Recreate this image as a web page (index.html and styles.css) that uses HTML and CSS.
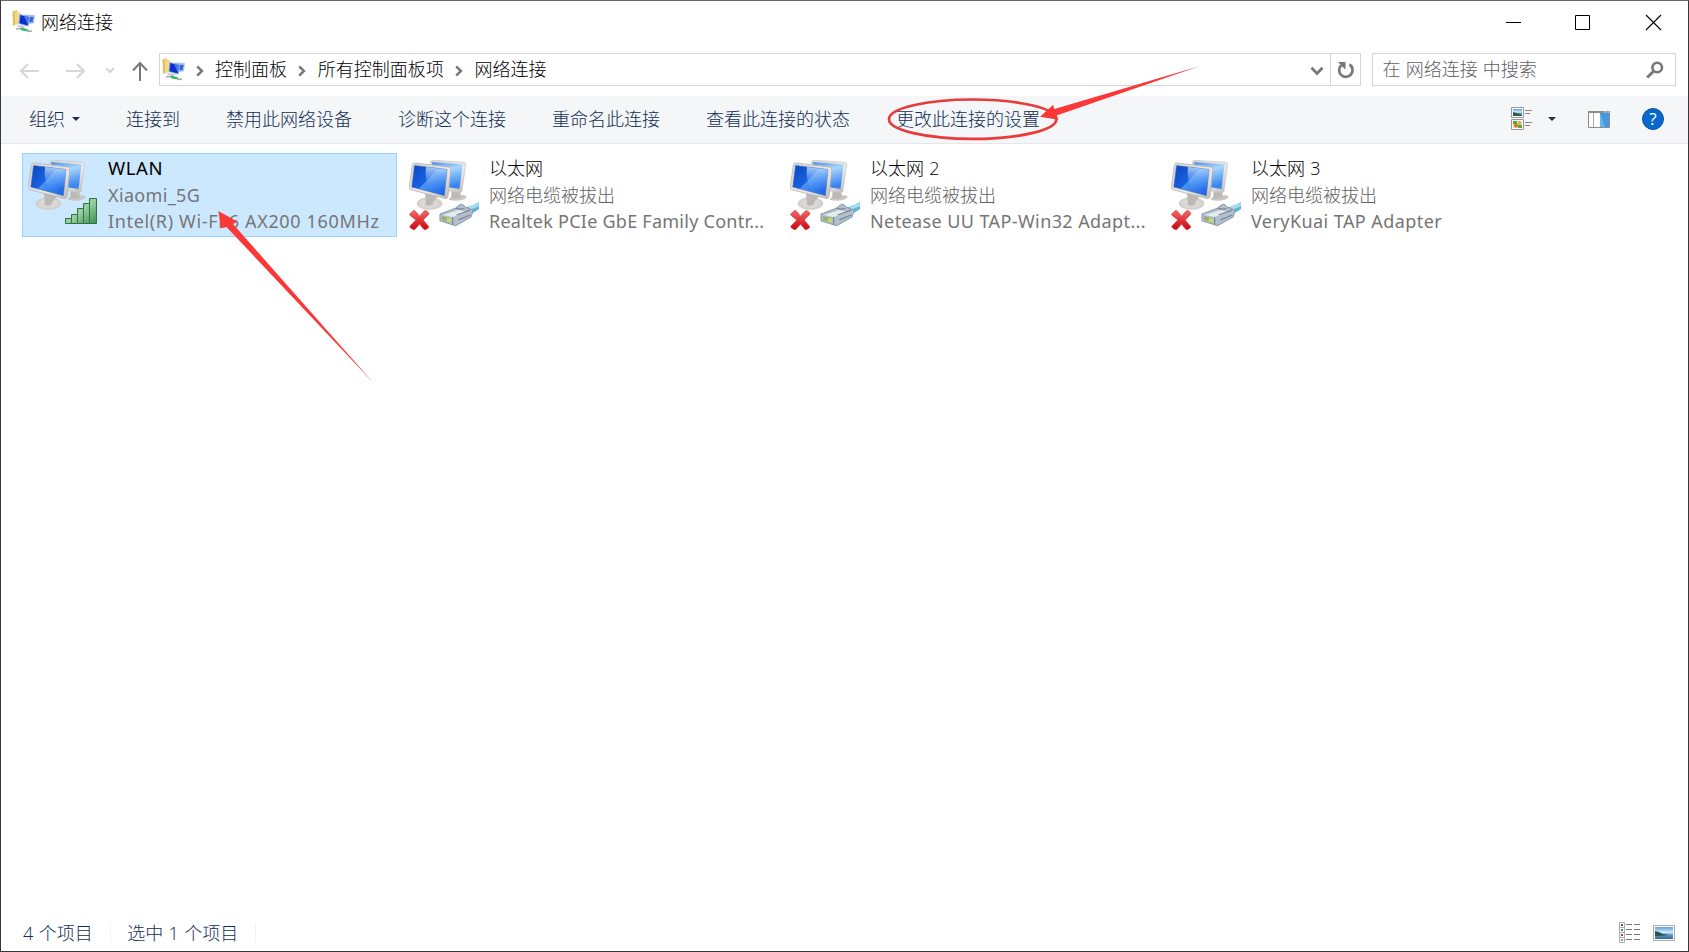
FILE: index.html
```html
<!DOCTYPE html>
<html lang="zh-CN">
<head>
<meta charset="utf-8">
<title>网络连接</title>
<link rel="stylesheet" href="styles.css">
</head>
<body>
<svg class="defs" aria-hidden="true">
  <defs>
    <linearGradient id="screen" x1="0" y1="0.1" x2="1" y2="0.9"><stop offset="0" stop-color="#0b49c4"/><stop offset=".45" stop-color="#1b62e0"/><stop offset=".46" stop-color="#4a93f5"/><stop offset="1" stop-color="#1b62e8"/></linearGradient>
    <linearGradient id="screenBack" x1="0" y1="0" x2="0.3" y2="1"><stop offset="0" stop-color="#4c8fe8"/><stop offset=".4" stop-color="#a8d6fc"/><stop offset="1" stop-color="#3b86ee"/></linearGradient>
    <linearGradient id="glare" x1="0" y1="0" x2="0" y2="1"><stop offset="0" stop-color="#d4edff"/><stop offset="1" stop-color="#5ca8fa" stop-opacity="0"/></linearGradient>
    <linearGradient id="frame" x1="0" y1="0" x2="1" y2="1"><stop offset="0" stop-color="#d8d6d4"/><stop offset=".6" stop-color="#ece9e6"/><stop offset="1" stop-color="#b9b6b3"/></linearGradient>
    <radialGradient id="base"><stop offset="0" stop-color="#bdbab8"/><stop offset=".5" stop-color="#dedbd8"/><stop offset="1" stop-color="#d0cdcb"/></radialGradient>
    <linearGradient id="bar" x1="0" y1="0" x2="1" y2="1"><stop offset="0" stop-color="#55a066"/><stop offset=".5" stop-color="#9ad0a2"/><stop offset="1" stop-color="#3c8e50"/></linearGradient>
    <linearGradient id="cross" x1="0" y1="0" x2="0" y2="1"><stop offset="0" stop-color="#f06a6a"/><stop offset=".5" stop-color="#e23438"/><stop offset="1" stop-color="#c8060c"/></linearGradient>
    <linearGradient id="photo" x1="0" y1="0" x2="0" y2="1"><stop offset="0" stop-color="#5c9be0"/><stop offset=".45" stop-color="#d8ebfa"/><stop offset=".6" stop-color="#6ea6cc"/><stop offset="1" stop-color="#2c6690"/></linearGradient>
    <symbol id="computers" viewBox="0 0 72 72">
      <path d="M40 38l14-3q5 1 3 3-5 4-17 2z" fill="#c9c6c4"/>
      <path d="M43 26l8 3 1 9-10 1z" fill="#bcb9b7"/>
      <path d="M21.500 1.500Q22 0 24 .2L55 2.400Q57 2.600 56.500 5L53 31Q52.500 33 50 32.500L22 28z" fill="url(#frame)" stroke="#c7c5c3" stroke-width=".7"/>
      <path d="M23 2l30.500 2.500L50.500 29 25 25z" fill="url(#screenBack)"/>
      <ellipse cx="20.500" cy="43.500" rx="12.500" ry="6" fill="url(#base)" stroke="#c9c7c5" stroke-width=".6"/>
      <path d="M16 33l13 3-7 9q-4 2-5-1z" fill="#bbb8b5"/>
      <path d="M3.500 4.500Q4 2.800 6 3L40 7Q42 7.400 41.700 9.500L39 36.500Q38.500 39 36 38.500L1.500 29.600Q-.3 29 .2 27z" fill="url(#frame)" stroke="#b6b4b2" stroke-width=".8"/>
      <path d="M5.600 5.500L38 9.500 35.300 35.500 2.800 27z" fill="url(#screen)" stroke="#3a6dbb" stroke-width=".6"/>
      <path d="M17 7l21 2.500-1.800 18L22 31Q15 20 17 7z" fill="url(#glare)" opacity=".75"/>
    </symbol>
    <symbol id="plug" viewBox="0 0 42 26">
      <path d="M20 7Q30 7 41 1v7q-6 5-13 5z" fill="#63b3d2"/>
      <path d="M30 5l11-3v3l-10 4z" fill="#a4def0"/>
      <path d="M1 13L17 7q4-4 6-4 2 0 4 3l8 3-2 7-16 9L1 20z" fill="#b3c0cc" stroke="#8797a7" stroke-width="1"/>
      <path d="M4 14l16-5 8 2-14 5z" fill="#e5ebef"/>
      <path d="M17 7q7 2 9 0M14 16v8M18 14l14-5M20 19l12-5" fill="none" stroke="#72869a" stroke-width="1.200"/>
      <path d="M3 15l8 2v5l-8-3z" fill="#9aab79"/>
      <path d="M8 17l4 1v4l-4-1z" fill="#c9dc55"/>
    </symbol>
    <symbol id="x" viewBox="0 0 22 22"><path d="M1 4.500L4.500 1.300Q6 .5 7 2l4 5 4.500-5Q17 .3 18.500 1.500l2 2q.8 1-.3 2L14.800 11l5.600 6.500q.8 1-.4 1.800L17.500 21q-1.200.7-2.200-.5L11 15.300 6.500 20.500q-1 1.200-2.300.4L1.300 19q-1-.8 0-2L7.200 11 1 6Q0 5.300 1 4.500z" fill="url(#cross)" stroke="#cf3b3d" stroke-width=".7"/></symbol>
    <symbol id="folder-net" viewBox="0 0 23 23">
      <path d="M.5 1.500L5 0v14l-4 2z" fill="#e0c05c"/>
      <path d="M3 1l5 1.500V14L3 15z" fill="#f0da88"/>
      <path d="M13 5l9.500.5L21.500 13l-8 1z" fill="#90b7ef" stroke="#a8bedc" stroke-width=".7"/>
      <path d="M8 4.500l9 2.500-.8 9L7 13.500z" fill="#0c2fd0" stroke="#8ea9d8" stroke-width=".8"/>
      <path d="M12 6l4.500 1-.5 8z" fill="#467bf0"/>
      <path d="M18 7h3.500l-1 5h-3z" fill="#3a62dc"/>
      <path d="M6 15l8 1-3 2-6-1.500z" fill="#c5d0de"/>
      <path d="M4 19l7-1M15 21.500l5-.5" stroke="#9cabb2" stroke-width="1.500"/>
      <path d="M8 19.500Q10 17 13 18.500L17 20q-3 2.500-9-.5z" fill="#2cbc58"/>
    </symbol>
    <symbol id="chev" viewBox="0 0 8 12"><path d="M1.200 1.400L5.900 6 1.200 10.600" fill="none" stroke="#777" stroke-width="2.500"/></symbol>
  </defs>
</svg>
<div class="window">
  <header class="titlebar">
    <svg class="app-icon"><use href="#folder-net"/></svg>
    <span class="title">网络连接</span>
    <svg class="controls" viewBox="0 0 160 17"><path d="M1 8.500h15M70.500 1.500h14v14h-14z" fill="none" stroke="#000"/><path d="M141 1l15 15M156 1l-15 15" fill="none" stroke="#000" stroke-width="1.100"/></svg>
  </header>
  <nav class="addressrow">
    <svg class="history" viewBox="0 0 132 22">
      <g fill="none" stroke="#d6d6d6" stroke-width="2"><path d="M20 11H2M9 4L2 11l7 7M47 11h18M58 4l7 7-7 7"/><path d="M87 8l4 4 4-4"/></g>
      <path d="M121 21V4M114 10.500L121 3l7 7.500" fill="none" stroke="#777" stroke-width="2"/>
    </svg>
    <div class="address">
      <svg class="app-icon"><use href="#folder-net"/></svg>
      <svg class="chev"><use href="#chev"/></svg><span>控制面板</span>
      <svg class="chev"><use href="#chev"/></svg><span>所有控制面板项</span>
      <svg class="chev"><use href="#chev"/></svg><span>网络连接</span>
      <svg class="drop" viewBox="0 0 14 10"><path d="M1.500 1.700L7 7.500l5.500-5.800" fill="none" stroke="#777" stroke-width="2.800"/></svg>
      <div class="refresh"><svg viewBox="0 0 18 18"><path d="M12.500 3.500A6.700 6.700 0 1 1 4 4.500" fill="none" stroke="#777" stroke-width="2.700"/><path d="M1 1h7.500v7.500L5.500 6z" fill="#777"/></svg></div>
    </div>
    <div class="search"><span>在 网络连接 中搜索</span><svg viewBox="0 0 18 18"><circle cx="11.200" cy="6.500" r="4.800" fill="none" stroke="#777" stroke-width="2.600"/><path d="M7.800 10L1.200 16.500" stroke="#777" stroke-width="3"/></svg></div>
  </nav>
  <div class="toolbar">
    <span class="menu">组织<i class="caret"></i></span>
    <span>连接到</span><span>禁用此网络设备</span><span>诊断这个连接</span><span>重命名此连接</span><span>查看此连接的状态</span><span>更改此连接的设置</span>
    <div class="tools">
      <svg class="view" viewBox="0 0 22 24"><path d="M.5.500h12v10H.5zM.5 12.500h12v10H.5z" fill="#fff" stroke="#999"/><path d="M2 2h9v7H2z" fill="url(#photo)"/><path d="M2 5q4 1 9 3v1H2z" fill="#31594c"/><path d="M2 14h9v7H2z" fill="#d6e4b4"/><path d="M2 14h4v3H2zM7 18h4v3H7z" fill="#63a046"/><circle cx="5" cy="18.500" r="2" fill="#cf7b22"/><circle cx="8.500" cy="16" r="1.700" fill="#e4ac39"/><path d="M14 3.500h7M14 6.500h5M14 15.500h7M14 18.500h5" stroke="#888"/></svg>
      <i class="caret"></i>
      <svg class="pane" viewBox="0 0 22 17"><path d="M.5.500h21v16H.5z" fill="#fff" stroke="#8a8a8a"/><path d="M0 0h22v2H0z" fill="#8a8a8a"/><path d="M16 1h1M18 1h1M20 1h1" stroke="#fff"/><path d="M5.500 2v14" stroke="#aaa"/><path d="M12 2h9v14h-9z" fill="#4299df"/><path d="M12 2l5 14h-5z" fill="#67b3ec"/></svg>
      <svg class="help" viewBox="0 0 22 22"><circle cx="11" cy="11" r="10.500" fill="#0868cc" stroke="#0752a2"/><text x="11" y="17" text-anchor="middle">?</text></svg>
    </div>
  </div>
  <main class="items">
    <article class="item selected">
      <div class="device"><svg class="pc"><use href="#computers"/></svg>
        <svg class="signal" viewBox="0 0 32 26"><g fill="url(#bar)" stroke="#2c7540"><path d="M.500 20.500h6v5h-6zM6.500 16.500h6v9h-6zM12.500 10.500h6v15h-6zM18.500 5.500h6v20h-6zM24.500.500h7v25h-7z"/></g></svg></div>
      <div class="info"><b class="latin wlan">WLAN</b><span class="latin ssid">Xiaomi_5G</span><span class="latin intel">Intel(R) Wi-Fi 6 AX200 160MHz</span></div>
    </article>
    <article class="item">
      <div class="device"><svg class="pc"><use href="#computers"/></svg><svg class="error"><use href="#x"/></svg><svg class="plug"><use href="#plug"/></svg></div>
      <div class="info"><b>以太网</b><span>网络电缆被拔出</span><span class="latin realtek">Realtek PCIe GbE Family Contr...</span></div>
    </article>
    <article class="item">
      <div class="device"><svg class="pc"><use href="#computers"/></svg><svg class="error"><use href="#x"/></svg><svg class="plug"><use href="#plug"/></svg></div>
      <div class="info"><b>以太网 2</b><span>网络电缆被拔出</span><span class="latin netease">Netease UU TAP-Win32 Adapt...</span></div>
    </article>
    <article class="item">
      <div class="device"><svg class="pc"><use href="#computers"/></svg><svg class="error"><use href="#x"/></svg><svg class="plug"><use href="#plug"/></svg></div>
      <div class="info"><b>以太网 3</b><span>网络电缆被拔出</span><span class="latin verykuai">VeryKuai TAP Adapter</span></div>
    </article>
  </main>
  <footer class="status">
    <span class="count">4 个项目</span><span class="count second">选中 1 个项目</span>
    <svg class="modes" viewBox="0 0 56 22"><g fill="#fff" stroke="#aaa"><path d="M.500.500h5v5h-5zM.500 5.500h5v5h-5zM.500 10.500h5v5h-5zM.500 15.500h5v5h-5z"/></g><path d="M2 3h2" stroke="#555" stroke-width="2"/><path d="M2 8h2" stroke="#4a8a5a" stroke-width="2"/><path d="M2 13h2" stroke="#c33" stroke-width="2"/><path d="M2 18h2" stroke="#999" stroke-width="2"/><path d="M7 2.500h6M15 2.500h6M7 7.500h6M15 7.500h6M7 12.500h6M15 12.500h6M7 17.500h6M15 17.500h6" stroke="#777"/><path d="M34.500 3.500h21v15h-21z" fill="#fff" stroke="#aaa"/><path d="M36 5h18v12H36z" fill="url(#photo)"/><path d="M36 9q5 1 8 3l6 1q-8 1-14 1z" fill="#24564e"/></svg>
  </footer>
  <svg class="marks" viewBox="0 0 1689 952">
    <ellipse cx="972.700" cy="119.200" rx="83.700" ry="19.700" fill="none" stroke="#e83b3b" stroke-width="2.700"/>
    <path d="M1040 116.700L1053 105l1.500 4L1200 66l-143.500 49.500 1.800 4.200z" fill="#fb3838"/>
    <path d="M218.300 211l19 10.500-4.300 2.500L373.800 383.200 226.500 227l-5.200 1.200z" fill="#fb3838"/>
  </svg>
</div>
</body>
</html>
```
FILE: styles.css
```css
* { box-sizing: border-box; }
body {
  margin: 0;
  font: 300 18px/26px "Open Sans", "Noto Sans CJK SC", sans-serif;
  color: #000;
  background: #fff;
}
svg { display: block; flex: none; }
.defs { position: absolute; width: 0; height: 0; }
.window {
  position: relative;
  display: flex;
  flex-direction: column;
  width: 1689px;
  height: 952px;
  border: 1px solid #3a3638;
  border-top-color: #6b6768;
  overflow: hidden;
  white-space: nowrap;
}
.titlebar { display: flex; height: 52px; padding: 8px 23px 0 11px; }
.app-icon { width: 23px; height: 23px; }
.titlebar .app-icon { margin-top: 1px; }
.title { margin-left: 6px; }
.controls { width: 160px; height: 17px; margin: 5px 0 0 auto; }
.addressrow { display: flex; height: 43px; padding-right: 12px; }
.history { width: 132px; height: 22px; margin: 7px 8px 0 18px; }
.address {
  display: flex;
  align-items: center;
  width: 1202px;
  height: 33px;
  border: 1px solid #d4d4d4;
  padding-left: 2px;
}
.address span, .search span { padding-bottom: 2px; }
.address .chev { width: 8px; height: 12px; margin: 2px 11.5px 0 11.3px; }
.address .app-icon + .chev { margin-left: 11px; margin-right: 11px; }
.drop { width: 14px; height: 10px; margin: 2px 6px 0 auto; }
.refresh { height: 31px; width: 30px; border-left: 1px solid #d4d4d4; padding: 7px 0 0 6px; }
.refresh svg { width: 18px; height: 18px; }
.search {
  display: flex;
  justify-content: space-between;
  align-items: center;
  width: 304px;
  height: 33px;
  margin-left: auto;
  border: 1px solid #d4d4d4;
  padding: 0 11px 0 9.5px;
  color: #5f5f5f;
}
.search span { word-spacing: .5px; }
.search svg { width: 18px; height: 18px; }
.toolbar {
  display: flex;
  align-items: center;
  gap: 46px;
  height: 48px;
  padding: 0 24px 2px 28px;
  background: #f4f6f8;
  border-bottom: 1px solid #e4e8eb;
  color: #122e54;
}
.menu { display: flex; align-items: center; gap: 7px; width: 51px; }
.caret { border: 4px solid transparent; border-top-color: #1e2d55; border-bottom: 0; }
.tools { display: flex; align-items: center; margin-left: auto; }
.view { width: 22px; height: 24px; margin-right: 15px; }
.pane { width: 22px; height: 17px; margin: 1px 32px 0 32px; }
.help { width: 22px; height: 22px; }
.help text { font: 17px "Open Sans", sans-serif; fill: #fff; }
.items {
  display: grid;
  grid-template-columns: repeat(4, 375px);
  column-gap: 6px;
  align-content: start;
  flex: 1;
  padding: 9px 0 0 21px;
}
.item { display: flex; height: 84px; border: 1px solid transparent; padding: 1px 0 0 5px; }
.selected { background: #cce8ff; border-color: #99d1ff; }
.device { position: relative; width: 80px; height: 80px; }
.pc { width: 72px; height: 72px; margin-top: 5px; }
.signal { position: absolute; left: 37px; top: 43px; width: 32px; height: 26px; }
.error { position: absolute; left: 0; top: 54px; width: 21px; height: 22px; }
.plug { position: absolute; left: 30px; top: 46px; width: 41px; height: 26px; }
.info { display: flex; flex-direction: column; line-height: 26.5px; color: #606060; }
.info b { font-weight: inherit; color: #000; word-spacing: .5px; }
.info .latin { font-weight: 400; font-family: "Noto Sans", sans-serif; }
.info span.latin { color: #757575; }
.info .wlan { font-size: 18.5px; letter-spacing: .6px; }
.ssid { letter-spacing: .35px; }
.intel { letter-spacing: .65px; }
.realtek { letter-spacing: .25px; }
.netease { letter-spacing: .4px; }
.verykuai { letter-spacing: .43px; }
.status { display: flex; align-items: center; height: 35px; padding: 0 13px 1px 22px; color: #122e54; word-spacing: .7px; }
.count { padding-right: 17px; border-right: 1px solid #f2f2f2; line-height: 20px; }
.second { padding-left: 16.5px; }
.modes { width: 56px; height: 22px; margin-left: auto; }
.marks { position: absolute; left: -1px; top: -1px; width: 1689px; height: 952px; }
```
